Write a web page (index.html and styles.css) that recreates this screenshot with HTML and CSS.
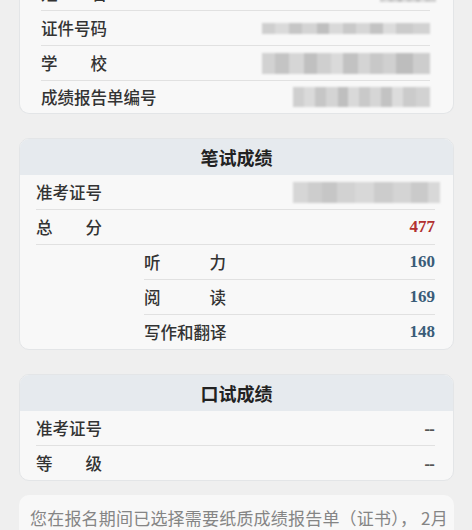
FILE: index.html
```html
<!DOCTYPE html>
<html lang="zh-CN">
<head>
<meta charset="utf-8">
<link rel="stylesheet" href="styles.css">
</head>
<body>
<div class="page">
  <section class="card card-info">
    <div class="row"><span class="lbl l4">姓名</span><span class="blur b-name"></span></div>
    <div class="row"><span class="lbl l4">证件号码</span><span class="blur b-id"></span></div>
    <div class="row"><span class="lbl l4">学校</span><span class="blur b-school"></span></div>
    <div class="row"><span class="lbl">成绩报告单编号</span><span class="blur b-report"></span></div>
  </section>

  <section class="card">
    <div class="head">笔试成绩</div>
    <div class="body">
      <div class="row"><span class="lbl l4">准考证号</span><span class="blur b-ticket"></span></div>
      <div class="row"><span class="lbl l4">总分</span><span class="num total">477</span></div>
      <div class="row sub"><span class="lbl l5">听力</span><span class="num">160</span></div>
      <div class="row sub"><span class="lbl l5">阅读</span><span class="num">169</span></div>
      <div class="row sub"><span class="lbl l5">写作和翻译</span><span class="num">148</span></div>
    </div>
  </section>

  <section class="card">
    <div class="head">口试成绩</div>
    <div class="body">
      <div class="row"><span class="lbl l4">准考证号</span><span class="dash">--</span></div>
      <div class="row"><span class="lbl l4">等级</span><span class="dash">--</span></div>
    </div>
  </section>

  <section class="card note">
    <p>您在报名期间已选择需要纸质成绩报告单（证书）， 2月</p>
  </section>
</div>
</body>
</html>
```

FILE: styles.css
```css
html, body {
  margin: 0;
  padding: 0;
  background: #efefef;
}
body {
  font-family: "Noto Sans CJK SC", "Noto Sans", sans-serif;
  color: #333;
}
.page {
  padding: 0 18px 0 19px;
  margin-top: -24px;
  display: flex;
  flex-direction: column;
  gap: 24px;
}
.card {
  background: #f8f8f8;
  border: 1px solid #e3e5e7;
  border-radius: 10px;
  overflow: hidden;
}
.card-info {
  border-top: none;
  border-radius: 0 0 10px 10px;
  padding: 0 23px 0 21px;
}
.card-info .row:last-child {
  height: 32px;
}
.head {
  height: 36px;
  background: #e6eaee;
  font-size: 18px;
  font-weight: 700;
  color: #222;
  display: flex;
  align-items: center;
  justify-content: center;
}
.body {
  padding: 0 18px 0 16px;
}
.row {
  height: 34px;
  border-bottom: 1px solid #e1e1e1;
  display: flex;
  align-items: center;
  justify-content: space-between;
  font-size: 16.5px;
}
.row:last-child {
  border-bottom: none;
}
.row.sub {
  margin-left: 108px;
}
.lbl {
  display: inline-block;
  color: #333;
  font-weight: 500;
  white-space: nowrap;
}
.l4 {
  width: 66px;
  text-align: justify;
  text-align-last: justify;
}
.l5 {
  width: 82px;
  text-align: justify;
  text-align-last: justify;
}
.num {
  font-family: "Liberation Serif", serif;
  font-weight: 700;
  font-size: 17px;
  color: #3a5c78;
}
.num.total {
  color: #b23030;
}
.dash {
  font-size: 16px;
  color: #555;
  font-weight: 700;
  letter-spacing: -1px;
  padding-right: 1px;
}
.blur {
  display: block;
  filter: blur(1.2px);
  background:
    linear-gradient(90deg,
      #cfcfcf 0 8%, #dadada 8% 16%, #c6c6c6 16% 24%, #d4d4d4 24% 33%,
      #bfbfbf 33% 40%, #d9d9d9 40% 48%, #c9c9c9 48% 56%, #d6d6d6 56% 64%,
      #c3c3c3 64% 72%, #dcdcdc 72% 80%, #cbcbcb 80% 90%, #d2d2d2 90% 100%);
}
.b-name {
  width: 56px;
  height: 10px;
  align-self: flex-end;
  margin-bottom: 8px;
  margin-right: -6px;
}
.b-id {
  width: 168px;
  height: 11px;
}
.b-school {
  width: 168px;
  height: 21px;
  background:
    linear-gradient(90deg,
      #d2d2d2 0 8%, #c4c4c4 8% 16%, #d6d6d6 16% 25%, #c0c0c0 25% 33%,
      #cfcfcf 33% 41%, #dadada 41% 48%, #c2c2c2 48% 57%, #d4d4d4 57% 64%,
      #c8c8c8 64% 72%, #d0d0d0 72% 80%, #bdbdbd 80% 90%, #cdcdcd 90% 100%);
}
.b-report {
  width: 137px;
  height: 20px;
}
.b-ticket {
  width: 147px;
  height: 21px;
  margin-right: -5px;
  background:
    linear-gradient(90deg,
      #d6d6d6 0 10%, #cdcdcd 10% 20%, #c6c6c6 20% 30%, #d2d2d2 30% 42%,
      #d8d8d8 42% 55%, #cccccc 55% 68%, #d4d4d4 68% 80%, #cacaca 80% 92%, #d8d8d8 92% 100%);
}
.note {
  margin-top: -10px;
  border: none;
  padding: 11px 10px 20px 11px;
}
.note p {
  margin: 0;
  font-size: 17px;
  line-height: 24px;
  letter-spacing: 0.2px;
  color: #858585;
  white-space: nowrap;
}
```
